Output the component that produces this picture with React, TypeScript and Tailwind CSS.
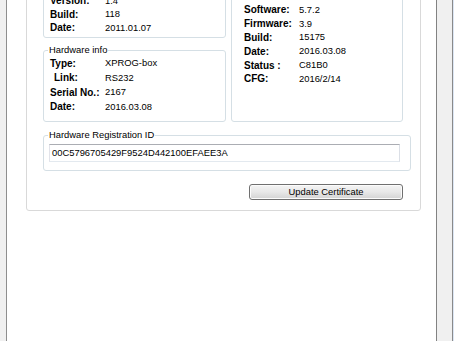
import React from 'react';

type Row = { label: string; value: string; indent?: boolean };

const firmwareRows: Row[] = [
  { label: 'Version:', value: '1.4' },
  { label: 'Build:', value: '118' },
  { label: 'Date:', value: '2011.01.07' },
];

const hardwareRows: Row[] = [
  { label: 'Type:', value: 'XPROG-box' },
  { label: 'Link:', value: 'RS232', indent: true },
  { label: 'Serial No.:', value: '2167' },
  { label: 'Date:', value: '2016.03.08' },
];

const softwareRows: Row[] = [
  { label: 'Software:', value: '5.7.2' },
  { label: 'Firmware:', value: '3.9' },
  { label: 'Build:', value: '15175' },
  { label: 'Date:', value: '2016.03.08' },
  { label: 'Status :', value: 'C81B0' },
  { label: 'CFG:', value: '2016/2/14' },
];

function InfoRows({ rows, rowClass }: { rows: Row[]; rowClass: string }) {
  return (
    <div className="flex flex-col">
      {rows.map((r, i) => (
        <div key={i} className={`flex items-center ${rowClass}`}>
          <span className={`w-[55px] shrink-0 text-[10px] font-bold ${r.indent ? 'pl-[4px]' : ''}`}>{r.label}</span>
          <span className="text-[9.4px]">{r.value}</span>
        </div>
      ))}
    </div>
  );
}

export default function App() {
  return (
    <div
      className="flex h-[341px] w-[454px] overflow-hidden bg-white text-black"
      style={{ fontFamily: '"Liberation Sans", Arial, sans-serif' }}
    >
      {/* left window edge */}
      <div className="w-[6px] shrink-0 bg-[#f0f0f0]" />
      <div className="w-px shrink-0 bg-[#8e8e8e]" />

      {/* client area */}
      <div className="w-[429px] shrink-0 bg-white pl-[19px]">
        <div className="-mt-[21px] w-[395px] rounded-[3px] border border-[#d9d9d9] pl-[16px] pr-[9px] pb-[10px]">
          {/* top columns */}
          <div className="flex w-[360px] gap-[5px]">
            <div className="flex w-[183px] flex-col">
              <fieldset className="rounded-[3px] border border-[#d5dfe5]">
                <legend className="ml-[4px] h-[12px]" />
                <div className="pl-[6px] pt-[2px] pb-[2.5px]">
                  <InfoRows rows={firmwareRows} rowClass="h-[13.5px]" />
                </div>
              </fieldset>
              <fieldset className="mt-[6px] rounded-[3px] border border-[#d5dfe5]">
                <legend className="ml-[4px] px-px text-[9.4px] leading-[12px]">Hardware info</legend>
                <div className="pl-[6px] pb-[7px]">
                  <InfoRows rows={hardwareRows} rowClass="h-[14.5px]" />
                </div>
              </fieldset>
            </div>
            <fieldset className="w-[172px] rounded-[3px] border border-[#d5dfe5]">
              <legend className="ml-[4px] h-[12px]" />
              <div className="pl-[12px] pt-[11px]">
                <InfoRows rows={softwareRows} rowClass="h-[13.8px]" />
              </div>
            </fieldset>
          </div>

          {/* registration id */}
          <fieldset className="mt-[7px] w-[368px] rounded-[3px] border border-[#d5dfe5]">
            <legend className="ml-[4px] px-px text-[9.4px] leading-[12px]">Hardware Registration ID</legend>
            <div className="pl-[5px] pt-[3px] pb-[8px]">
              <div className="flex h-[18px] w-[351px] items-center border border-[#abadb3] border-b-[#e3e9ef] border-l-[#e2e3ea] border-r-[#dbdfe6] px-[2px] text-[9.4px]">
                00C5796705429F9524D442100EFAEE3A
              </div>
            </div>
          </fieldset>

          <div className="mt-[13px] flex justify-end pr-[8px]">
            <button className="flex h-[16px] w-[154px] items-center justify-center rounded-[3px] border border-[#707070] bg-linear-to-b from-[#f4f4f4] via-[#e8e8e8] to-[#d3d3d3] text-[9.4px] shadow-[inset_0_0_0_1px_#fcfcfc]">
              Update Certificate
            </button>
          </div>
        </div>
      </div>

      {/* right window edge */}
      <div className="w-px shrink-0 bg-[#828282]" />
      <div className="w-[15px] shrink-0 bg-[#f0f0f0]" />
      <div className="w-px shrink-0 bg-[#8a8a8a]" />
      <div className="flex-1 bg-[#dce6f4]" />
    </div>
  );
}
